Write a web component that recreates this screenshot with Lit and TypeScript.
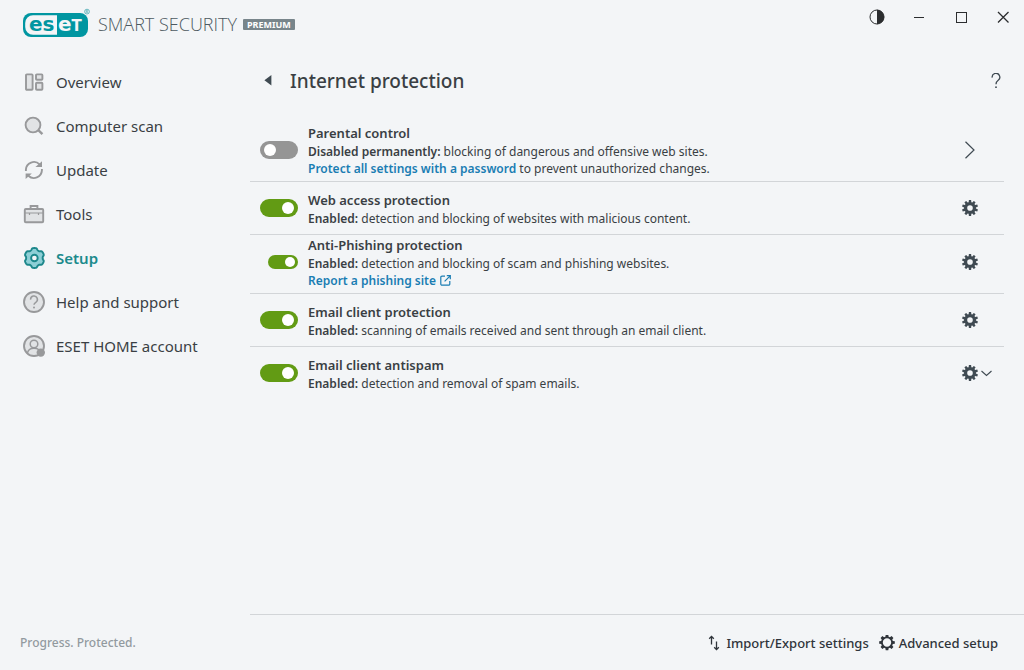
import { LitElement, html, svg, css, nothing } from "lit";
import { customElement, state } from "lit/decorators.js";

/* Outline of a cog: square teeth evenly spaced round the centre, first tooth up. */
function cog(cx: number, cy: number, teeth: number, outer: number, inner: number, width: number): string {
  const pts: string[] = [];
  const step = (Math.PI * 2) / teeth;
  for (let i = 0; i < teeth; i++) {
    const a = i * step - Math.PI / 2;
    const pairs: [number, number][] = [
      [inner, -width * 0.62],
      [outer, -width * 0.5],
      [outer, width * 0.5],
      [inner, width * 0.62],
    ];
    for (const [r, w] of pairs) {
      const x = cx + r * Math.cos(a) - w * Math.sin(a);
      const y = cy + r * Math.sin(a) + w * Math.cos(a);
      pts.push(`${x.toFixed(2)} ${y.toFixed(2)}`);
    }
  }
  return `M${pts.join("L")}Z`;
}

function hole(cx: number, cy: number, r: number): string {
  return `M${cx - r} ${cy}a${r} ${r} 0 1 0 ${2 * r} 0a${r} ${r} 0 1 0 ${-2 * r} 0Z`;
}

/* Soft, wavy cog with six lobes. */
function lobes(cx: number, cy: number, mid: number, amp: number): string {
  const pts: string[] = [];
  for (let i = 0; i < 120; i++) {
    const a = (i / 120) * Math.PI * 2 - Math.PI / 2;
    const c = Math.cos(6 * (a + Math.PI / 2)) + 0.25;
    const r = mid + amp * Math.tanh(2.2 * c);
    pts.push(`${(cx + r * Math.cos(a)).toFixed(2)} ${(cy + r * Math.sin(a)).toFixed(2)}`);
  }
  return `M${pts.join("L")}Z`;
}

const navIcons: Record<string, unknown> = {
  overview: svg`
    <rect x="4" y="4.4" width="6.6" height="15.4" rx="0.8"/>
    <rect x="14" y="4.4" width="6.4" height="5.4" rx="0.8"/>
    <rect x="14" y="12.8" width="6.4" height="7" rx="0.8"/>`,
  scan: svg`
    <circle cx="11" cy="11" r="7.4"/>
    <path d="M16.6 16.4L20.4 20.2" stroke-width="2.4"/>`,
  update: svg`
    <g fill="none">
      <path d="M3.9 13V11.6A8 8 0 0 1 17.6 6.4"/>
      <path d="M19.9 11V12.4A8 8 0 0 1 6.4 17.8"/>
    </g>
    <path d="M13.4 8.9H20V3.2Z" class="solid"/>
    <path d="M3.6 21V15.4H9.8Z" class="solid"/>`,
  tools: svg`
    <rect x="2.8" y="7" width="18.4" height="13.2" rx="1"/>
    <path d="M8.6 6.8V4H15.4V6.8" fill="none"/>
    <path d="M3 11H21M7.5 11V13M16.5 11V13" fill="none" stroke-width="1.2"/>`,
  setup: svg`
    <path d=${lobes(12.4, 12, 9.1, 0.9)}/>
    <circle cx="12.4" cy="12" r="3.3" class="core"/>`,
  help: svg`
    <circle cx="12" cy="12" r="10"/>
    <path d="M8.6 9.6A3.4 3.4 0 1 1 13.8 12.3C12.6 13 12 13.5 12 14.8" fill="none" stroke-width="1.5"/>
    <circle cx="12" cy="17.6" r="1" class="solid"/>`,
  account: svg`
    <circle cx="12" cy="12" r="10"/>
    <path d="M5.4 19.2C6 15.6 8.6 14.2 12 14.2S18 15.6 18.6 19.2" fill="none" stroke-width="1.5"/>
    <circle cx="12" cy="10" r="3.8" stroke-width="1.5"/>
    <circle cx="18.8" cy="18.6" r="4.2" class="solid"/>`,
};

interface NavItem { icon: string; label: string; current?: boolean }

const navItems: NavItem[] = [
  { icon: "overview", label: "Overview" },
  { icon: "scan", label: "Computer scan" },
  { icon: "update", label: "Update" },
  { icon: "tools", label: "Tools" },
  { icon: "setup", label: "Setup", current: true },
  { icon: "help", label: "Help and support" },
  { icon: "account", label: "ESET HOME account" },
];

interface Module {
  id: string;
  title: string;
  state: string;
  text: string;
  on: boolean;
  child?: boolean;
  link?: { label: string; after?: string; external?: boolean };
  action: "open" | "settings" | "menu";
}

@customElement("app-root")
export class AppRoot extends LitElement {
  @state() private modules: Module[] = [
    {
      id: "parental", title: "Parental control", state: "Disabled permanently:",
      text: "blocking of dangerous and offensive web sites.", on: false, action: "open",
      link: { label: "Protect all settings with a password", after: " to prevent unauthorized changes." },
    },
    {
      id: "web", title: "Web access protection", state: "Enabled:",
      text: "detection and blocking of websites with malicious content.", on: true, action: "settings",
    },
    {
      id: "phishing", title: "Anti-Phishing protection", state: "Enabled:",
      text: "detection and blocking of scam and phishing websites.", on: true, child: true, action: "settings",
      link: { label: "Report a phishing site", external: true },
    },
    {
      id: "email", title: "Email client protection", state: "Enabled:",
      text: "scanning of emails received and sent through an email client.", on: true, action: "settings",
    },
    {
      id: "antispam", title: "Email client antispam", state: "Enabled:",
      text: "detection and removal of spam emails.", on: true, action: "menu",
    },
  ];

  static styles = css`
    :host {
      display: flex;
      flex-direction: column;
      min-height: 100vh;
      box-sizing: border-box;
      background: #f3f5f7;
      color: #3a3f44;
      font-family: "Noto Sans", "Open Sans", sans-serif;
      font-size: 12px;
    }
    * { box-sizing: border-box; }
    svg { display: block; flex: none; }
    button {
      display: flex;
      align-items: center;
      justify-content: center;
      padding: 0;
      border: 0;
      background: none;
      color: inherit;
      font: inherit;
      cursor: pointer;
    }
    a { color: inherit; text-decoration: none; }

    .titlebar { display: flex; justify-content: space-between; align-items: flex-start; height: 48px; }
    .brand { display: flex; align-items: center; padding: 8px 0 0 22px; height: 40px; }
    .product { margin-left: 7px; font-family: "Open Sans", sans-serif; font-weight: 300; font-size: 18px; color: #4d5960; white-space: nowrap; }
    .edition {
      margin-left: 6px;
      padding: 0 4px;
      border-radius: 1px;
      background: #78858b;
      color: #fff;
      font-size: 9px;
      font-weight: 700;
      line-height: 11px;
    }
    .window { display: flex; }
    .window button { width: 42px; height: 34px; color: #2b2d2f; }

    .body { display: flex; flex: 1; }
    .side { display: flex; flex-direction: column; width: 250px; flex: none; padding-top: 12px; }
    nav { display: flex; flex-direction: column; }
    .nav {
      display: flex;
      align-items: center;
      gap: 10px;
      height: 44px;
      padding-left: 22px;
      font-size: 15px;
    }
    .nav svg { fill: #e1e3e5; stroke: #98999b; stroke-width: 1.9; }
    .nav .solid { fill: #98999b; stroke: none; }
    .nav.current { color: #1b8a8c; font-weight: 600; }
    .nav.current svg { fill: #8dcfd6; stroke: #1c878b; }
    .nav.current .core { fill: #f3f5f7; }
    .motto { margin: auto 0 0; padding-left: 20px; line-height: 55px; font-size: 12px; font-weight: 500; color: #929a9f; }

    main { display: flex; flex-direction: column; flex: 1; min-width: 0; }
    .head { display: flex; align-items: center; height: 66px; padding: 0 16px 0 6px; }
    .back { width: 24px; height: 24px; }
    h1 { flex: 1; margin: 0 0 0 10px; font-size: 19px; font-weight: 500; line-height: 26px; }
    .helpbtn { width: 24px; height: 24px; }

    .rows { margin: 9px 20px 0 0; padding: 0; list-style: none; }
    .row {
      display: flex;
      align-items: center;
      min-height: 53px;
      padding-left: 10px;
      border-bottom: 1px solid #d2d5d8;
    }
    .row.tall { padding-bottom: 4px; }
    .row:last-child { border-bottom-color: transparent; }
    .slot { display: flex; justify-content: flex-end; width: 38px; margin-right: 10px; }
    .switch {
      appearance: none;
      display: flex;
      align-items: center;
      width: 38px;
      height: 18px;
      margin: 0;
      padding: 0 4px;
      border-radius: 9px;
      background: #959595;
      cursor: pointer;
    }
    .switch::before { content: ""; width: 12px; height: 12px; border-radius: 50%; background: #fff; }
    .switch:checked { justify-content: flex-end; background: #629b14; }
    .switch.small { width: 30px; height: 14px; padding: 0 3px; }
    .switch.small::before { width: 10px; height: 10px; }
    .text { flex: 1; min-width: 0; padding-top: 2px; line-height: 17px; }
    .tall .text { padding-top: 1px; }
    .name { display: block; width: fit-content; line-height: 19px; font-weight: 600; font-size: 13px; }
    p { margin: 0; }
    b { font-weight: 600; }
    .text a { color: #1a7db3; font-weight: 600; }
    .text a svg { display: inline-block; margin-left: 4px; vertical-align: -1px; }
    .actions { display: flex; align-items: center; width: 70px; padding-left: 28px; color: #3f4a52; }
    .actions button { height: 24px; }

    footer {
      display: flex;
      align-items: center;
      justify-content: flex-end;
      gap: 10px;
      height: 56px;
      margin-top: auto;
      padding-right: 26px;
      border-top: 1px solid #d2d5d8;
      color: #2f343a;
      font-size: 13px;
      font-weight: 500;
    }
    footer button { gap: 4px; }
  `;

  private toggle(id: string) {
    this.modules = this.modules.map((m) => (m.id === id ? { ...m, on: !m.on } : m));
  }

  private logo() {
    return html`<svg width="69" height="32" viewBox="0 0 69 32" role="img" aria-label="ESET">
      <rect x="1" y="5" width="65" height="24" rx="8" fill="#0096a1"/>
      <path d="M35 7.2H11A7.8 7.8 0 0 0 3.2 15V19A7.8 7.8 0 0 0 11 26.8H35Z" fill="#f3f5f7"/>
      <g font-family="DejaVu Sans, sans-serif" font-weight="700" font-size="20">
        <text x="7" y="22.5" fill="#0096a1">es</text>
        <text x="36" y="22.5" fill="#f3f5f7">e<tspan font-size="15">T</tspan></text>
      </g>
      <circle cx="65" cy="3.6" r="2.4" fill="none" stroke="#4aa9b2" stroke-width="0.8"/>
      <path d="M64.2 5V2.4H65.2A0.7 0.7 0 0 1 65.2 3.8H64.2M65.2 3.8L66 5" fill="none" stroke="#4aa9b2" stroke-width="0.6"/>
    </svg>`;
  }

  private gear() {
    return html`<svg width="16" height="16" viewBox="0 0 16 16">
      <path fill="currentColor" fill-rule="evenodd" d=${cog(8, 8, 10, 8, 5.8, 2.2) + hole(8, 8, 2.8)}/>
    </svg>`;
  }

  private actions(m: Module) {
    if (m.action === "open") {
      return html`<button aria-label="Open ${m.title}">
        <svg width="16" height="20" viewBox="2 0 16 20" fill="none" stroke="currentColor" stroke-width="1.2">
          <path d="M5.5 1.8L14 10L5.5 18.2"/>
        </svg>
      </button>`;
    }
    return html`<button aria-label="${m.title} settings">${this.gear()}</button>
      ${m.action === "menu"
        ? html`<button aria-label="${m.title} menu">
            <svg width="16" height="16" viewBox="0 0 16 16" fill="none" stroke="currentColor" stroke-width="1.1">
              <path d="M3.5 6L8.5 10.5L13.5 6"/>
            </svg>
          </button>`
        : nothing}`;
  }

  private row(m: Module) {
    return html`<li class="row ${m.link ? "tall" : ""}">
      <div class="slot">
        <input class="switch ${m.child ? "small" : ""}" type="checkbox" role="switch" id=${m.id}
          .checked=${m.on} @change=${() => this.toggle(m.id)}>
      </div>
      <div class="text">
        <label class="name" for=${m.id}>${m.title}</label>
        <p><b>${m.state}</b> ${m.text}</p>
        ${m.link
          ? html`<p><a href="#">${m.link.label}${m.link.external
              ? html`<svg width="11" height="11" viewBox="0 0 11 11" fill="none" stroke="currentColor" stroke-width="1.2">
                  <path d="M5 1.1H2A1.2 1.2 0 0 0 0.8 2.3V9A1.2 1.2 0 0 0 2 10.2H8.6A1.2 1.2 0 0 0 9.8 9V6"/>
                  <path d="M6.8 0.7H10.3V4.2M10.2 0.8L4.6 6.4"/>
                </svg>`
              : nothing}</a>${m.link.after ?? nothing}</p>`
          : nothing}
      </div>
      <div class="actions">${this.actions(m)}</div>
    </li>`;
  }

  render() {
    return html`
      <header class="titlebar">
        <div class="brand">
          ${this.logo()}
          <span class="product">SMART SECURITY</span>
          <span class="edition">PREMIUM</span>
        </div>
        <div class="window">
          <button aria-label="Contrast">
            <svg width="16" height="16" viewBox="0 0 16 16">
              <circle cx="8" cy="8" r="7" fill="none" stroke="currentColor" stroke-width="1"/>
              <path d="M8 0.8A7.2 7.2 0 0 1 8 15.2Z" fill="currentColor"/>
            </svg>
          </button>
          <button aria-label="Minimize">
            <svg width="12" height="12" viewBox="0 0 12 12"><path d="M1 6.5H11" stroke="currentColor"/></svg>
          </button>
          <button aria-label="Maximize">
            <svg width="12" height="12" viewBox="0 0 12 12"><rect x="1.5" y="1.5" width="10" height="10" fill="none" stroke="currentColor"/></svg>
          </button>
          <button aria-label="Close">
            <svg width="12" height="12" viewBox="0 0 12 12"><path d="M1 1L11.5 11.5M11.5 1L1 11.5" stroke="currentColor" stroke-width="1.3"/></svg>
          </button>
        </div>
      </header>
      <div class="body">
        <div class="side">
          <nav>
            ${navItems.map((n) => html`<a class="nav ${n.current ? "current" : ""}" href="#"
              aria-current=${n.current ? "page" : nothing}>
              <svg width="24" height="24" viewBox="0 0 24 24">${navIcons[n.icon]}</svg>
              <span>${n.label}</span>
            </a>`)}
          </nav>
          <p class="motto">Progress. Protected.</p>
        </div>
        <main>
          <div class="head">
            <button class="back" aria-label="Back">
              <svg width="8" height="12" viewBox="0 0 8 12"><path d="M7.4 0V10.4L0.4 5.2Z" fill="#3f4a52"/></svg>
            </button>
            <h1>Internet protection</h1>
            <button class="helpbtn" aria-label="Help">
              <svg width="10" height="16" viewBox="0 0 10 16">
                <path d="M1.2 4.6A3.8 3.8 0 1 1 7.2 7.2C5.6 8.4 5 9 5 11.2" fill="none" stroke="#3f4a52" stroke-width="1.3"/>
                <circle cx="5" cy="14.2" r="0.9" fill="#3f4a52"/>
              </svg>
            </button>
          </div>
          <ul class="rows">${this.modules.map((m) => this.row(m))}</ul>
          <footer>
            <button>
              <svg width="14" height="16" viewBox="0 0 14 16" fill="none" stroke="currentColor" stroke-width="1.3">
                <path d="M3.5 9.6V1.6M1.2 3.8L3.5 1.4L5.8 3.8M8.5 6.4V14.4M6.2 12.2L8.5 14.6L10.8 12.2"/>
              </svg>
              Import/Export settings
            </button>
            <button>
              <svg width="16" height="16" viewBox="0 0 16 16">
                <path fill="currentColor" fill-rule="evenodd" d=${cog(8, 7.5, 8, 7.8, 5.8, 2.6) + hole(8, 7.5, 4.2)}/>
              </svg>
              Advanced setup
            </button>
          </footer>
        </main>
      </div>
    `;
  }
}
